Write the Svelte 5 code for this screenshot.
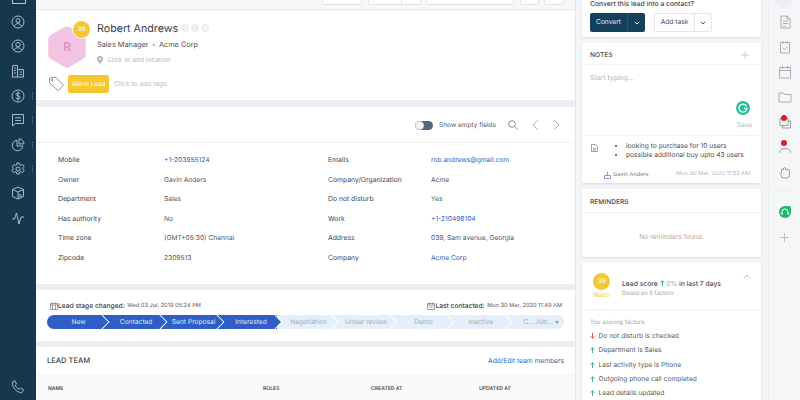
<script>
  const fieldsLeft = [
    ['Mobile', '+1-203955124', true],
    ['Owner', 'Gavin Anders'],
    ['Department', 'Sales'],
    ['Has authority', 'No'],
    ['Time zone', '(GMT+05:30) Chennai'],
    ['Zipcode', '2309513']
  ];
  const fieldsRight = [
    ['Emails', 'rob.andrews@gmail.com', true],
    ['Company/Organization', 'Acme'],
    ['Do not disturb', 'Yes'],
    ['Work', '+1-210498104', true],
    ['Address', '039, Sam avenue, Georgia'],
    ['Company', 'Acme Corp', true]
  ];
  const stages = [
    ['New', true], ['Contacted', true], ['Sent Proposal', true], ['Interested', true],
    ['Negotiation'], ['Under review'], ['Demo'], ['Inactive'], ['C... /Un...']
  ];
  const factors = [
    ['Do not disturb is checked', false],
    ['Department is Sales', true],
    ['Last activity type is Phone', true],
    ['Outgoing phone call completed', true],
    ['Lead details updated', true]
  ];
  // sidebar icons, 14x14 box
  const navIcons = [
    { y: 22, dots: false, d: 'M7 1a6 6 0 1 0 0 12A6 6 0 0 0 7 1zM7 3.6a2 2 0 1 1 0 4 2 2 0 0 1 0-4zM3.4 11.4c.6-2 2-2.8 3.6-2.8s3 .8 3.6 2.8' },
    { y: 46, dots: false, d: 'M7 1a6 6 0 1 0 0 12A6 6 0 0 0 7 1zM7 3.4a2.2 2.2 0 1 1 0 4.4 2.2 2.2 0 0 1 0-4.4zM3.2 11.2C3.8 9.4 5.2 8.8 7 8.8s3.2.6 3.8 2.4' },
    { y: 71, dots: false, d: 'M1.5 13V1.5h5V13M6.5 5.5h6V13M1 13h12M3 4h2M3 6.5h2M3 9h2M8.5 8H11M8.5 10.5H11' },
    { y: 96, dots: true, d: 'M7 1a6 6 0 1 0 0 12A6 6 0 0 0 7 1zM9 5c-.4-.8-1.1-1.1-2-1.1-1.2 0-2 .6-2 1.5 0 2 4.2 1 4.2 3.1 0 1-.9 1.6-2.2 1.6-1 0-1.8-.4-2.2-1.2M7 2.8v8.4' },
    { y: 120, dots: true, d: 'M1.5 1.5h11v9h-8l-3 2.5zM4 4.8h6M4 7.5h6' },
    { y: 145, dots: true, d: 'M6 2.2A5.3 5.3 0 1 0 11.8 8H6zM8 .9a5.2 5.2 0 0 1 5 5H8z' },
    { y: 169, dots: true, d: 'M5.8 1h2.4l.4 1.7 1.5.7 1.5-.9 1.5 2-1.1 1.3v1.4l1.1 1.3-1.5 2-1.5-.9-1.5.7-.4 1.7H5.8l-.4-1.7-1.5-.7-1.5.9-1.5-2 1.1-1.3V5.8L1.4 4.5l1.5-2 1.5.9 1.5-.7zM7 5a2 2 0 1 0 0 4 2 2 0 0 0 0-4z' },
    { y: 193, dots: false, d: 'M7 1l5.5 2.5v7L7 13l-5.5-2.5v-7zM1.5 3.5L7 6l5.5-2.5M7 6v7M9 8.5a1.2 1.2 0 1 0 .1 0z' },
    { y: 218, dots: false, d: 'M1 8h2.5l2-6 2.5 11 2-7h3' }
  ];
  const railIcons = [
    'M3 1h6l3 3v9H3zM9 1v3h3M5 6h5M5 8.5h5M5 11h3',
    'M2.5 2.5h9V13h-9zM5 1v2.5M9 1v2.5M4.8 8l1.7 1.7L9.5 6.5',
    'M1.5 2.5h11V13h-11zM1.5 5.5h11M4.5 1v3M9.5 1v3',
    'M1 3h4.5l1.2 1.5H13V12H1z'
  ];
</script>

<div class="page">
  <nav class="sidebar">
    <div class="navtop"></div>
    {#each navIcons as n}
      <div class="navitem" style="top:{n.y - 7}px">
        <svg width="14" height="14" viewBox="0 0 14 14" fill="none" stroke="#b9c9d4" stroke-width="0.9"><path d={n.d} /></svg>
        {#if n.dots}<span class="dots"></span>{/if}
      </div>
    {/each}
    <div class="navitem" style="top:380px">
      <svg width="14" height="14" viewBox="0 0 14 14" fill="none" stroke="#b9c9d4" stroke-width="0.9"><path d="M2 1.5l2-.5 1.5 3-1.2 1.2c.6 1.8 2 3.3 3.8 4l1.2-1.2 3 1.5-.6 2.2c-.3.8-1 1-1.9.9C5.5 12 1.8 8 1.3 3c0-.7.2-1.2.7-1.5z" /></svg>
    </div>
  </nav>

  <main class="main">
    <div class="toolbar">
      <span class="tb" style="width:40px"></span>
      <span class="tb split" style="width:53px"><i></i></span>
      <span class="tb" style="width:88px"></span>
      <span class="tb" style="width:19px"></span>
      <span class="tb" style="width:20px"></span>
    </div>

    <section class="card profile">
      <div class="person">
        <div class="avatar">
          <svg width="40" height="44" viewBox="0 0 40 44"><path d="M20 1.5a5 5 0 0 1 2.4.6l13.8 7.8a5 5 0 0 1 2.5 4.3v15.6a5 5 0 0 1-2.5 4.3L22.4 42a5 5 0 0 1-4.8 0L3.8 33.8a5 5 0 0 1-2.5-4.3V14.2a5 5 0 0 1 2.5-4.3L17.6 2.1A5 5 0 0 1 20 1.5z" fill="#f2c3e2" /></svg>
          <span class="initial">R</span>
          <span class="score">39</span>
        </div>
        <div class="who">
          <div class="nameline">
            <span class="name">Robert Andrews</span>
            <span class="soc">f</span><span class="soc">t</span><span class="soc">in</span>
          </div>
          <div class="role">Sales Manager <b>•</b> Acme Corp</div>
          <div class="loc">
            <svg width="6" height="8" viewBox="0 0 6 8"><path d="M3 0a3 3 0 0 0-3 3c0 2 3 5 3 5s3-3 3-5a3 3 0 0 0-3-3z" fill="#b4b9bf" /><circle cx="3" cy="3" r="1" fill="#fff" /></svg>
            Click to add location
          </div>
        </div>
      </div>
      <div class="tags">
        <svg width="16" height="16" viewBox="0 0 16 16" fill="none" stroke="#71879a" stroke-width="0.9"><path d="M1.5 2l6-.8 7.3 7.3a1 1 0 0 1 0 1.4l-4 4a1 1 0 0 1-1.4 0L1.8 7z" /><circle cx="4.2" cy="4" r="0.8" /></svg>
        <span class="warm">Warm Lead</span>
        <span class="addtags">Click to add tags</span>
      </div>
    </section>

    <section class="card details">
      <div class="dethead">
        <span class="toggle"><i></i></span>
        <span class="showempty">Show empty fields</span>
        <svg class="search" width="10" height="10" viewBox="0 0 10 10" fill="none" stroke="#6d7378" stroke-width="0.8"><circle cx="4" cy="4" r="3.3" /><path d="M6.5 6.5L9.5 9.5" /></svg>
        <svg class="chev" width="7" height="12" viewBox="0 0 7 12" fill="none" stroke="#9aa0a6" stroke-width="0.8"><path d="M6 1L1 6l5 5" /></svg>
        <svg class="chev" width="7" height="12" viewBox="0 0 7 12" fill="none" stroke="#9aa0a6" stroke-width="0.8"><path d="M1 1l5 5-5 5" /></svg>
      </div>
      <div class="fields">
        <div class="fieldcol first">
          {#each fieldsLeft as f}
            <span class="lab">{f[0]}</span><span class="val" class:link={f[2]}>{f[1]}</span>
          {/each}
        </div>
        <div class="fieldcol second">
          {#each fieldsRight as f}
            <span class="lab">{f[0]}</span><span class="val" class:link={f[2]}>{f[1]}</span>
          {/each}
        </div>
      </div>
    </section>

    <section class="card stagecard">
      <div class="stagehead">
        <span class="stamp">
          <svg width="8" height="8" viewBox="0 0 8 8" fill="none" stroke="#777" stroke-width="0.7"><path d="M.5 1.5h7v6h-7zM.5 3h7M2.5 .5v2M5.5 .5v2M2.5 3v4.5M5.5 3v4.5" /></svg>
          <b>Lead stage changed:</b> Wed 03 Jul, 2019 05:24 PM
        </span>
        <span class="stamp">
          <svg width="8" height="8" viewBox="0 0 8 8" fill="none" stroke="#777" stroke-width="0.7"><path d="M.5 1.5h7v6h-7zM.5 3h7M2.5 .5v2M5.5 .5v2M2 5h4" /></svg>
          <b>Last contacted:</b> Mon 30 Mar, 2020 11:49 AM
        </span>
      </div>
      <div class="stages">
        {#each stages as s, i}
          <div class="stage" class:done={s[1]}>
            {s[0]}
            {#if i < 8}
              <svg class="arrow" width="10" height="14" viewBox="0 0 10 14" preserveAspectRatio="none">
                <path d="M0 0l7 7-7 7h1.5l7-7-7-7z" fill="#fff" />
                {#if s[1]}<path d="M0 0l7 7-7 7z" fill="#2f5fc4" />{/if}
              </svg>
            {/if}
          </div>
        {/each}
        <span class="caret"></span>
      </div>
    </section>

    <section class="card team">
      <div class="teamhead">
        <span class="teamtitle">LEAD TEAM</span>
        <span class="teamlink">Add/Edit team members</span>
      </div>
      <div class="teamcols">
        <span>NAME</span><span>ROLES</span><span>CREATED AT</span><span>UPDATED AT</span>
      </div>
    </section>
  </main>

  <aside class="right">
    <section class="rcard convert">
      <div class="cvtitle">Convert this lead into a contact?</div>
      <div class="cvbtns">
        <span class="btn dark">
          <span>Convert</span>
          <i><svg width="6" height="4" viewBox="0 0 6 4" fill="none" stroke="#fff" stroke-width="0.9"><path d="M.8.8L3 3l2.2-2.2" /></svg></i>
        </span>
        <span class="btn light">
          <span>Add task</span>
          <i><svg width="6" height="4" viewBox="0 0 6 4" fill="none" stroke="#444" stroke-width="0.9"><path d="M.8.8L3 3l2.2-2.2" /></svg></i>
        </span>
      </div>
    </section>

    <section class="rcard notes">
      <div class="rhead">
        <span>NOTES</span>
        <svg width="8" height="8" viewBox="0 0 8 8" stroke="#bcc0c4" stroke-width="0.8"><path d="M4 0v8M0 4h8" /></svg>
      </div>
      <div class="typing">
        <div class="placeholder">Start typing...</div>
        <div class="savewrap">
          <span class="grammarly">
            <svg width="10" height="10" viewBox="0 0 10 10" fill="none" stroke="#fff" stroke-width="1.2"><path d="M8.5 3.2A4 4 0 1 0 9 5.3H6" /></svg>
          </span>
          <span class="save">Save</span>
        </div>
      </div>
      <div class="note">
        <svg class="noteicon" width="7" height="8" viewBox="0 0 7 8" fill="none" stroke="#777" stroke-width="0.7"><path d="M.5.5h4l2 2v5h-6zM2 4.5h3M2 6h3" /></svg>
        <ul>
          <li>looking to purchase for 10 users</li>
          <li>possible additional buy upto 43 users</li>
        </ul>
      </div>
      <div class="notefoot">
        <span class="author">
          <svg width="7" height="8" viewBox="0 0 7 8" fill="none" stroke="#4d75c9" stroke-width="0.7"><path d="M.5 4.5h6v3h-6zM3.5 4.5V.5" /></svg>
          Gavin Anders
        </span>
        <span class="when">Mon 30 Mar, 2020 11:53 AM</span>
      </div>
    </section>

    <section class="rcard reminders">
      <div class="rhead tall"><span>REMINDERS</span></div>
      <div class="noremind">No reminders found.</div>
    </section>

    <section class="rcard leadscore">
      <div class="lshead">
        <div class="lsbadge">
          <span class="lscircle">39</span>
          <span class="lswarm">Warm</span>
        </div>
        <div class="lsinfo">
          <div class="lstitle">Lead score <svg width="5" height="6" viewBox="0 0 5 6" fill="none" stroke="#2fa98c" stroke-width="0.9"><path d="M2.5 6V.8M.4 2.8L2.5.8l2.1 2" /></svg> <em>0%</em> in last 7 days</div>
          <div class="lssub">Based on 5 factors</div>
        </div>
        <svg class="lschev" width="8" height="5" viewBox="0 0 8 5" fill="none" stroke="#9aa0a6" stroke-width="0.7"><path d="M.5 4.5L4 1l3.5 3.5" /></svg>
      </div>
      <div class="factors">
        <div class="ftitle">Top scoring factors:</div>
        {#each factors as f}
          <div class="factor">
            <svg width="5" height="6" viewBox="0 0 5 6" fill="none" stroke={f[1] ? '#2fa98c' : '#e0474c'} stroke-width="0.9">
              {#if f[1]}<path d="M2.5 6V.8M.4 2.8L2.5.8l2.1 2" />{:else}<path d="M2.5 0v5.2M.4 3.2l2.1 2 2.1-2" />{/if}
            </svg>
            {f[0]}
          </div>
        {/each}
      </div>
    </section>
  </aside>

  <div class="rail">
    <span class="railtop"></span>
    {#each railIcons as d}
      <svg class="ri" width="14" height="14" viewBox="0 0 14 14" fill="none" stroke="#8c9298" stroke-width="0.7"><path {d} /></svg>
    {/each}
    <span class="reddot">
      <svg class="ri" width="14" height="14" viewBox="0 0 14 14" fill="none" stroke="#777d83" stroke-width="0.7"><path d="M2 3.5h8v7H2zM4.5 10.5V13h8V6H10" /></svg>
      <i></i>
    </span>
    <span class="reddot">
      <svg class="ri" width="14" height="14" viewBox="0 0 14 14" fill="none" stroke="#777d83" stroke-width="0.7"><path d="M1.5 13c0-3 2-4.5 5.5-4.5s5.5 1.5 5.5 4.5" /></svg>
      <i></i>
    </span>
    <svg class="ri" width="14" height="14" viewBox="0 0 14 14" fill="none" stroke="#777d83" stroke-width="0.7"><path d="M3.5 8V5a1 1 0 0 1 2 0M5.5 5V3.5a1 1 0 0 1 2 0V5M7.5 5a1 1 0 0 1 2 0M9.5 5.5a1 1 0 0 1 2 0V10a3 3 0 0 1-3 3H6a3 3 0 0 1-3-3L1.5 7.5" /></svg>
    <span class="raildiv"></span>
    <span class="headset">
      <svg width="8" height="8" viewBox="0 0 8 8" fill="none" stroke="#fff" stroke-width="1"><path d="M1 6V4a3 3 0 0 1 6 0v2" /><path d="M1 5v1.5M7 5v1.5" stroke-width="1.6" /></svg>
    </span>
    <svg class="railplus" width="9" height="9" viewBox="0 0 9 9" stroke="#b9bdc2" stroke-width="0.9"><path d="M4.5 0v9M0 4.5h9" /></svg>
  </div>
</div>

<style>
  :global(body) {
    margin: 0;
    background: #f5f6f8;
  }
  .page {
    width: 800px;
    height: 400px;
    overflow: hidden;
    display: grid;
    grid-template-columns: 36px 539px 186px 39px;
    font-family: Inter, "Liberation Sans", sans-serif;
    text-rendering: geometricPrecision;
    color: #3b3f44;
    background: #f4f5f8;
  }

  .sidebar {
    background: #16384f;
    position: relative;
    height: 400px;
  }
  .navtop {
    width: 12px;
    height: 3px;
    margin-left: 12px;
    border: 1px solid #b9c9d4;
    border-top: 0;
  }
  .navitem {
    position: absolute;
    left: 11px;
    width: 14px;
    height: 14px;
    line-height: 0;
  }
  .dots {
    position: absolute;
    left: 21px;
    top: 4px;
    width: 1px;
    height: 1px;
    border-radius: 50%;
    background: #8fa3b1;
    box-shadow: 0 2.5px 0 #8fa3b1, 0 5px 0 #8fa3b1;
  }

  .main {
    background: #ebeef2;
    display: flex;
    flex-direction: column;
    height: 400px;
    border-right: 1px solid #e4e6ea;
    width: 539px;
  }
  .toolbar {
    height: 5px;
    background: #f6f7f9;
    border-bottom: 1px solid #e2e5ea;
    display: flex;
    justify-content: flex-end;
    align-items: flex-end;
    gap: 5.5px;
    padding: 0 11px 4px 0;
  }
  .tb {
    display: block;
    height: 6px;
    background: #fff;
    border: 1px solid #dfe2e6;
    border-top: 0;
    border-radius: 0 0 2px 2px;
    box-sizing: border-box;
    position: relative;
  }
  .tb.split i {
    position: absolute;
    right: 18px;
    top: 0;
    bottom: 0;
    width: 1px;
    background: #dfe2e6;
  }
  .card {
    background: #fff;
  }
  .profile {
    height: 90px;
    box-sizing: border-box;
    padding: 12px 0 0 11px;
    margin-bottom: 7px;
  }
  .person {
    display: flex;
    gap: 10px;
    height: 43px;
  }
  .avatar {
    position: relative;
    width: 40px;
    height: 44px;
    margin-top: 3px;
    line-height: 0;
  }
  .initial {
    position: absolute;
    left: 0;
    right: 0;
    top: 15px;
    line-height: 14px;
    text-align: center;
    font-size: 12px;
    color: #d77fb9;
  }
  .score {
    position: absolute;
    left: 25px;
    top: -5px;
    width: 17px;
    height: 17px;
    line-height: 17px;
    border-radius: 50%;
    border: 1px solid #fff;
    background: #f6c72f;
    color: #fff;
    font-size: 6.5px;
    text-align: center;
  }
  .nameline {
    display: flex;
    align-items: center;
    gap: 2px;
    height: 14px;
    margin-top: -1px;
  }
  .name {
    font-size: 10.7px;
    color: #3c4045;
    margin-right: 1px;
  }
  .soc {
    width: 8px;
    height: 8px;
    line-height: 8px;
    border-radius: 50%;
    background: #eceeef;
    color: #fff;
    font-size: 5px;
    text-align: center;
  }
  .role {
    font-size: 7.35px;
    margin-top: 5px;
    color: #4b4f54;
  }
  .role b {
    color: #b6babe;
    font-weight: 400;
    margin: 0 1px;
  }
  .loc {
    font-size: 6.6px;
    color: #b8bcc0;
    margin-top: 7px;
    display: flex;
    align-items: center;
    gap: 4px;
  }
  .tags {
    display: flex;
    align-items: center;
    margin-top: 10px;
    margin-left: 1px;
  }
  .warm {
    margin-left: 4px;
    width: 41px;
    height: 18px;
    line-height: 18px;
    background: #f6c72f;
    border-radius: 2px;
    color: #fff;
    font-size: 6.3px;
    text-align: center;
  }
  .addtags {
    font-size: 6.67px;
    color: #bcc0c4;
    margin-left: 5px;
  }

  .details {
    height: 177px;
    margin-bottom: 6px;
  }
  .dethead {
    height: 36px;
    border-bottom: 1px solid #f3f4f6;
    display: flex;
    align-items: center;
    justify-content: flex-end;
    padding-right: 15px;
    box-sizing: border-box;
  }
  .toggle {
    width: 18px;
    height: 9px;
    border-radius: 5px;
    background: #4f6980;
    position: relative;
    margin-top: 1px;
  }
  .toggle i {
    position: absolute;
    left: 0;
    top: 0;
    width: 9px;
    height: 9px;
    box-sizing: border-box;
    border-radius: 50%;
    background: #f3f4f6;
    border: 1px solid #dfe2e6;
  }
  .showempty {
    font-size: 6.5px;
    color: #55595e;
    margin-left: 6px;
  }
  .search {
    margin-left: 12px;
  }
  .chev {
    margin-left: 14px;
  }
  .fields {
    display: grid;
    grid-template-columns: 270px 1fr;
    padding: 7px 0 0 22px;
  }
  .fieldcol {
    display: grid;
    grid-auto-rows: 19.5px;
    align-items: center;
  }
  .first {
    grid-template-columns: 106px 1fr;
  }
  .second {
    grid-template-columns: 103px 1fr;
  }
  .lab {
    font-size: 6.8px;
    color: #3f4347;
  }
  .val {
    font-size: 6.67px;
    color: #53575b;
    margin-top: 1px;
  }
  .val.link {
    color: #2f61c4;
  }

  .stagecard {
    height: 51px;
    margin-bottom: 6px;
    box-sizing: border-box;
    padding: 11px 13px 0 11px;
  }
  .stagehead {
    display: flex;
    justify-content: space-between;
    align-items: center;
    height: 9px;
    margin-bottom: 5px;
    font-size: 5.65px;
    color: #55595e;
  }
  .stamp {
    display: flex;
    align-items: center;
    white-space: pre;
    margin-left: 3px;
  }
  .stamp b {
    font-size: 6.67px;
    font-weight: 500;
    color: #3b3f44;
    margin-right: 1px;
  }
  .stages {
    display: grid;
    grid-template-columns: repeat(9, 1fr);
    height: 14px;
    border-radius: 7px;
    overflow: hidden;
    background: #e4effa;
    position: relative;
    margin-right: -2px;
  }
  .stage {
    position: relative;
    text-align: center;
    line-height: 14px;
    font-size: 6.67px;
    color: #a3adb7;
    white-space: nowrap;
    padding-left: 6px;
  }
  .stage.done {
    background: #2f5fc4;
    color: #dfe8f7;
  }
  .arrow {
    position: absolute;
    right: -7px;
    top: 0;
    z-index: 1;
  }
  .caret {
    position: absolute;
    right: 5px;
    top: 5.5px;
    border: 2px solid transparent;
    border-top: 3px solid #8f98a1;
    border-bottom: 0;
  }

  .team {
    flex: 1;
  }
  .teamhead {
    height: 27px;
    display: flex;
    justify-content: space-between;
    align-items: center;
    padding: 0 11px;
  }
  .teamtitle {
    font-size: 7.5px;
    font-weight: 500;
    color: #3f4347;
  }
  .teamlink {
    font-size: 6.67px;
    color: #2f61c4;
  }
  .teamcols {
    background: #fafafa;
    border-top: 1px solid #f1f2f4;
    height: 26px;
    box-sizing: border-box;
    display: grid;
    grid-template-columns: 215px 108px 108px 1fr;
    padding: 11px 0 0 12px;
    font-size: 5.1px;
    font-weight: 600;
    color: #4a4e53;
  }

  .right {
    display: flex;
    flex-direction: column;
    gap: 6px;
    padding: 0 0 0 7px;
    height: 400px;
    width: 179px;
  }
  .rcard {
    background: #fff;
    box-shadow: 0 1px 2px rgba(60, 70, 90, 0.14);
  }
  .convert {
    height: 37px;
    padding-left: 8px;
    box-sizing: border-box;
  }
  .cvtitle {
    font-size: 6.75px;
    font-weight: 500;
    line-height: 8px;
    color: #3b3f44;
  }
  .cvbtns {
    display: flex;
    gap: 9px;
    margin-top: 5px;
  }
  .btn {
    display: flex;
    height: 19px;
    line-height: 19px;
    font-size: 6.67px;
    border-radius: 2px;
    box-sizing: border-box;
  }
  .btn span {
    text-align: center;
  }
  .btn i {
    display: flex;
    align-items: center;
    justify-content: center;
  }
  .dark {
    width: 55px;
    background: #15405c;
    color: #e6edf2;
  }
  .dark span {
    width: 37px;
  }
  .dark i {
    width: 18px;
    border-left: 1px solid #2b5270;
    box-sizing: border-box;
  }
  .light {
    width: 58px;
    background: #fff;
    border: 1px solid #e6e8eb;
    line-height: 17px;
    color: #4b4f54;
  }
  .light span {
    width: 39px;
  }
  .light i {
    flex: 1;
    border-left: 1px solid #e6e8eb;
  }

  .notes {
    height: 141px;
  }
  .rhead {
    height: 22px;
    box-sizing: border-box;
    padding: 3px 12px 0 8px;
    display: flex;
    align-items: center;
    justify-content: space-between;
    font-size: 6.5px;
    font-weight: 500;
    letter-spacing: 0.1px;
    color: #3f4347;
    border-bottom: 1px solid #f1f2f4;
  }
  .rhead.tall {
    height: 24px;
  }
  .typing {
    height: 71px;
    position: relative;
    border-bottom: 1px solid #f1f2f4;
    box-sizing: border-box;
  }
  .placeholder {
    padding: 8px 0 0 8px;
    font-size: 6.9px;
    color: #b2b6ba;
  }
  .savewrap {
    position: absolute;
    right: 8px;
    top: 36px;
    display: flex;
    flex-direction: column;
    align-items: center;
    gap: 6px;
  }
  .grammarly {
    width: 14px;
    height: 14px;
    border-radius: 50%;
    background: #25c29b;
    display: flex;
    align-items: center;
    justify-content: center;
    margin-right: 3px;
  }
  .save {
    font-size: 6.4px;
    color: #b2b6ba;
  }
  .note {
    position: relative;
    padding: 6px 0 0 0;
    font-size: 6.67px;
    line-height: 9.5px;
    color: #4b4f54;
  }
  .noteicon {
    position: absolute;
    left: 9px;
    top: 8px;
  }
  .note ul {
    margin: 0;
    padding-left: 44px;
  }
  .notefoot {
    display: flex;
    justify-content: space-between;
    padding: 10px 11px 0 22px;
    font-size: 5.6px;
    color: #b2b6ba;
  }
  .author {
    color: #73787d;
    display: flex;
    gap: 2px;
    align-items: center;
  }

  .reminders {
    height: 69px;
  }
  .noremind {
    text-align: center;
    font-size: 6.67px;
    color: #a8acb0;
    padding-top: 20px;
  }

  .leadscore {
    flex: 1;
  }
  .lshead {
    height: 47px;
    display: flex;
    position: relative;
    border-bottom: 1px solid #f1f2f4;
    box-sizing: border-box;
    padding: 10px 0 0 11px;
  }
  .lsbadge {
    width: 17px;
    display: flex;
    flex-direction: column;
    align-items: center;
  }
  .lscircle {
    width: 17px;
    height: 17px;
    line-height: 17px;
    flex: none;
    border-radius: 50%;
    background: #f6c72f;
    color: #fff;
    font-size: 6.5px;
    text-align: center;
  }
  .lswarm {
    font-size: 6.1px;
    color: #f6c72f;
    margin-top: 2px;
  }
  .lsinfo {
    margin-left: 12px;
    padding-top: 6px;
  }
  .lstitle {
    font-size: 6.75px;
    font-weight: 500;
    color: #4a4e53;
    white-space: pre;
  }
  .lstitle em {
    font-style: normal;
    font-weight: 400;
    color: #a4a8ac;
  }
  .lssub {
    font-size: 5.8px;
    color: #a4a8ac;
    margin-top: 2px;
  }
  .lschev {
    position: absolute;
    right: 10px;
    top: 11px;
  }
  .factors {
    padding: 9px 0 0 8px;
  }
  .ftitle {
    font-size: 5.9px;
    color: #a4a8ac;
    margin-bottom: 3px;
  }
  .factor {
    height: 14.2px;
    display: flex;
    align-items: center;
    gap: 3.5px;
    font-size: 6.67px;
    color: #55595e;
  }

  .rail {
    display: flex;
    flex-direction: column;
    align-items: center;
    gap: 11px;
    position: relative;
    padding: 15px 0 0 0;
    background: #f5f6f8;
    border-left: 1px solid #eceef1;
    width: 32px;
    box-sizing: border-box;
    margin-left: 7px;
  }
  .railtop {
    position: absolute;
    left: 5px;
    top: -10px;
    width: 18px;
    height: 18px;
    border-radius: 50%;
    background: #eceef3;
  }
  .ri {
    display: block;
    flex: none;
  }
  .reddot {
    position: relative;
    display: block;
    height: 14px;
  }
  .reddot i {
    position: absolute;
    left: 3px;
    top: 0;
    width: 6px;
    height: 6px;
    border-radius: 50%;
    background: #dc1f2b;
  }
  .raildiv {
    width: 20px;
    height: 1px;
    background: #eaecef;
  }
  .headset {
    width: 12px;
    height: 12px;
    margin-top: 4px;
    background: #25b36e;
    border-radius: 50%;
    border-top-right-radius: 2px;
    display: flex;
    align-items: center;
    justify-content: center;
  }
  .railplus {
    display: block;
    flex: none;
    margin-top: 4px;
  }
</style>
